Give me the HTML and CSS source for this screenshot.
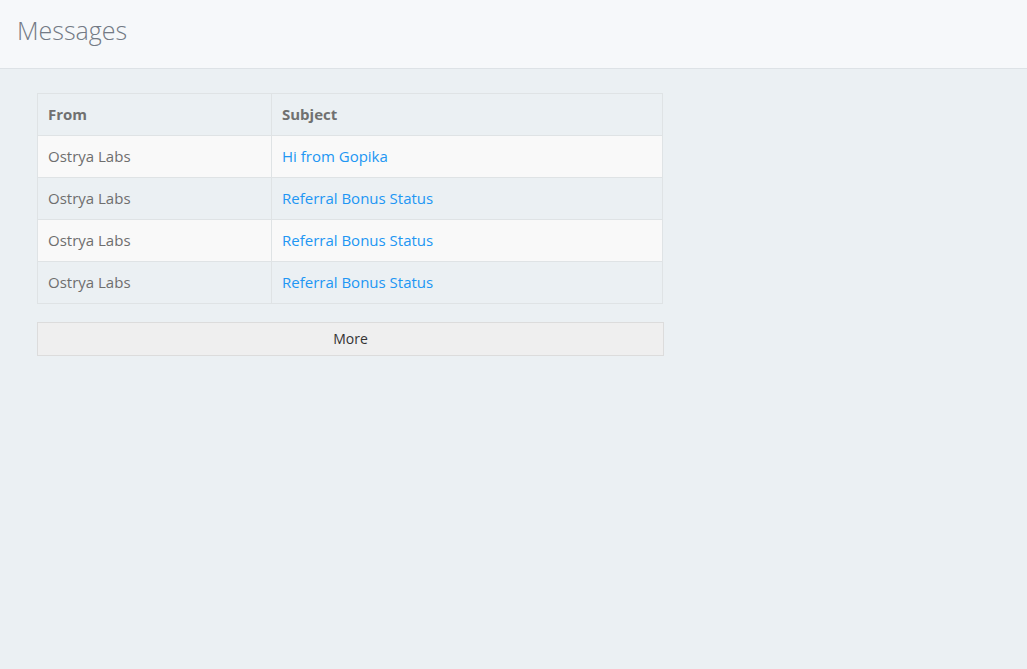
FILE: index.html
```html
<!DOCTYPE html>
<html>
<head>
<meta charset="utf-8">
<title>Messages</title>
<link rel="stylesheet" href="styles.css">
</head>
<body>
<header class="page-header">
  <h1 class="page-title">Messages</h1>
</header>
<main class="content">
  <div class="messages">
    <table class="msg-table">
      <thead>
        <tr><th class="col-from">From</th><th>Subject</th></tr>
      </thead>
      <tbody>
        <tr><td>Ostrya Labs</td><td><a href="#">Hi from Gopika</a></td></tr>
        <tr><td>Ostrya Labs</td><td><a href="#">Referral Bonus Status</a></td></tr>
        <tr><td>Ostrya Labs</td><td><a href="#">Referral Bonus Status</a></td></tr>
        <tr><td>Ostrya Labs</td><td><a href="#">Referral Bonus Status</a></td></tr>
      </tbody>
    </table>
    <button class="more-btn" type="button">More</button>
  </div>
</main>
</body>
</html>
```
FILE: styles.css
```css
html, body {
  margin: 0;
  padding: 0;
  height: 100%;
}
body {
  background: #ebf0f3;
  font-family: "Open Sans", "DejaVu Sans", sans-serif;
  font-size: 15px;
  color: #6e6e6e;
}
.page-header {
  background: #f6f8fa;
  border-bottom: 1px solid #dde2e6;
  height: 69px;
  box-sizing: border-box;
  padding: 0 17px;
  display: flex;
  align-items: center;
}
.page-title {
  margin: 0;
  font-weight: 300;
  font-size: 25px;
  color: #737a85;
  line-height: 1;
  padding-bottom: 7px;
}
.content {
  padding: 24px 37px;
}
.messages {
  width: 627px;
}
.msg-table {
  width: 626px;
  border-collapse: collapse;
  border: 1px solid #dfe3e5;
}
.msg-table th,
.msg-table td {
  border: 1px solid #dfe3e5;
  height: 42px;
  padding: 0 10px 2px;
  text-align: left;
  vertical-align: middle;
  box-sizing: border-box;
}
.msg-table th {
  font-weight: 700;
  color: #707070;
  background: #ebf0f3;
}
.col-from {
  width: 234px;
}
.msg-table tbody tr:nth-child(odd) td {
  background: #f9f9f9;
}
.msg-table tbody tr:nth-child(even) td {
  background: #ebf0f3;
}
.msg-table a {
  color: #2196f3;
  text-decoration: none;
}
.more-btn {
  display: block;
  margin-top: 18px;
  width: 627px;
  height: 34px;
  padding: 0 0 2px;
  background: #efefef;
  border: 1px solid #dcdcdc;
  font-family: "Open Sans", "DejaVu Sans", sans-serif;
  font-size: 14px;
  color: #333;
  cursor: pointer;
}
```
